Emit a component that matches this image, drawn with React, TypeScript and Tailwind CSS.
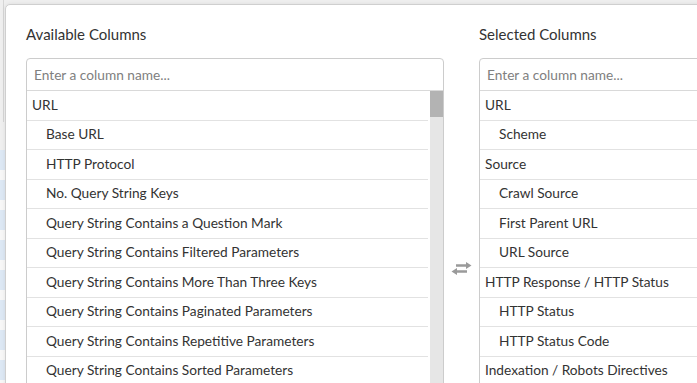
const available = [
  { label: "URL", child: false },
  { label: "Base URL", child: true },
  { label: "HTTP Protocol", child: true },
  { label: "No. Query String Keys", child: true },
  { label: "Query String Contains a Question Mark", child: true },
  { label: "Query String Contains Filtered Parameters", child: true },
  { label: "Query String Contains More Than Three Keys", child: true },
  { label: "Query String Contains Paginated Parameters", child: true },
  { label: "Query String Contains Repetitive Parameters", child: true },
  { label: "Query String Contains Sorted Parameters", child: true },
];

const selected = [
  { label: "URL", child: false },
  { label: "Scheme", child: true },
  { label: "Source", child: false },
  { label: "Crawl Source", child: true },
  { label: "First Parent URL", child: true },
  { label: "URL Source", child: true },
  { label: "HTTP Response / HTTP Status", child: false },
  { label: "HTTP Status", child: true },
  { label: "HTTP Status Code", child: true },
  { label: "Indexation / Robots Directives", child: false },
];

type Item = { label: string; child: boolean };

function ColumnList({ title, items, scrollbar }: { title: string; items: Item[]; scrollbar?: boolean }) {
  return (
    <div className="w-[418px] shrink-0">
      {/* Heading */}
      <h3 className="h-[20px] text-[15px] leading-[20px] text-[#333]">{title}</h3>

      <div className="mt-[14px] h-[340px] overflow-hidden rounded-t-[4px] border border-[#cccccc]">
        <input
          placeholder="Enter a column name..."
          className="block h-[32px] w-full border-b border-[#d9d9d9] px-[7px] text-[13.7px] text-[#333] outline-none placeholder:text-[#808080]"
        />

        <div className="flex">
          <div className="flex-1">
            {items.map((item) => (
              <div
                key={item.label}
                className={`flex h-[29.5px] items-center border-b border-[#e2e2e2] text-[13.7px] text-[#333] ${
                  item.child ? "pl-[19px]" : "pl-[5px]"
                }`}
              >
                {item.label}
              </div>
            ))}
          </div>

          {scrollbar && (
            <div className="ml-[2px] w-[13px] bg-[#e6e6e6]">
              <div className="h-[26px] bg-[#b3b3b3]" />
            </div>
          )}
        </div>
      </div>
    </div>
  );
}

function SwapIcon() {
  return (
    <svg width="21" height="13" viewBox="0 0 21 13" fill="#9a9a9a">
      <path d="M5 2.2 H15 V0 L20.5 3.5 L15 7 V4.8 H5 Z" />
      <path d="M16 8.2 H6 V6 L0.5 9.5 L6 13 V10.8 H16 Z" />
    </svg>
  );
}

export default function App() {
  return (
    <div className="relative h-[383px] w-[697px] overflow-hidden bg-[#efefef] font-['Lato','Liberation_Sans',sans-serif]">
      {/* page rows behind the overlay */}
      <div className="absolute left-0 top-[150px] h-[233px] w-[6px] bg-[repeating-linear-gradient(to_bottom,#dde8f4_0px,#dde8f4_20px,#f7f7f7_20px,#f7f7f7_30px)]" />
      <div className="absolute left-[3px] top-0 h-[122px] w-[1px] bg-[#d6d6d6]" />

      {/* Modal */}
      <div className="relative ml-[5px] mt-[4px] h-[500px] w-[1000px] rounded-tl-[5px] border border-[#cfcfcf] bg-white pl-[20px] pt-[19px] shadow-[0_0_4px_rgba(0,0,0,0.08)]">
        <div className="flex items-start">
          <ColumnList title="Available Columns" items={available} scrollbar />

          <div className="flex w-[35px] shrink-0 justify-center pt-[238px]">
            <SwapIcon />
          </div>

          <ColumnList title="Selected Columns" items={selected} />
        </div>
      </div>
    </div>
  );
}
